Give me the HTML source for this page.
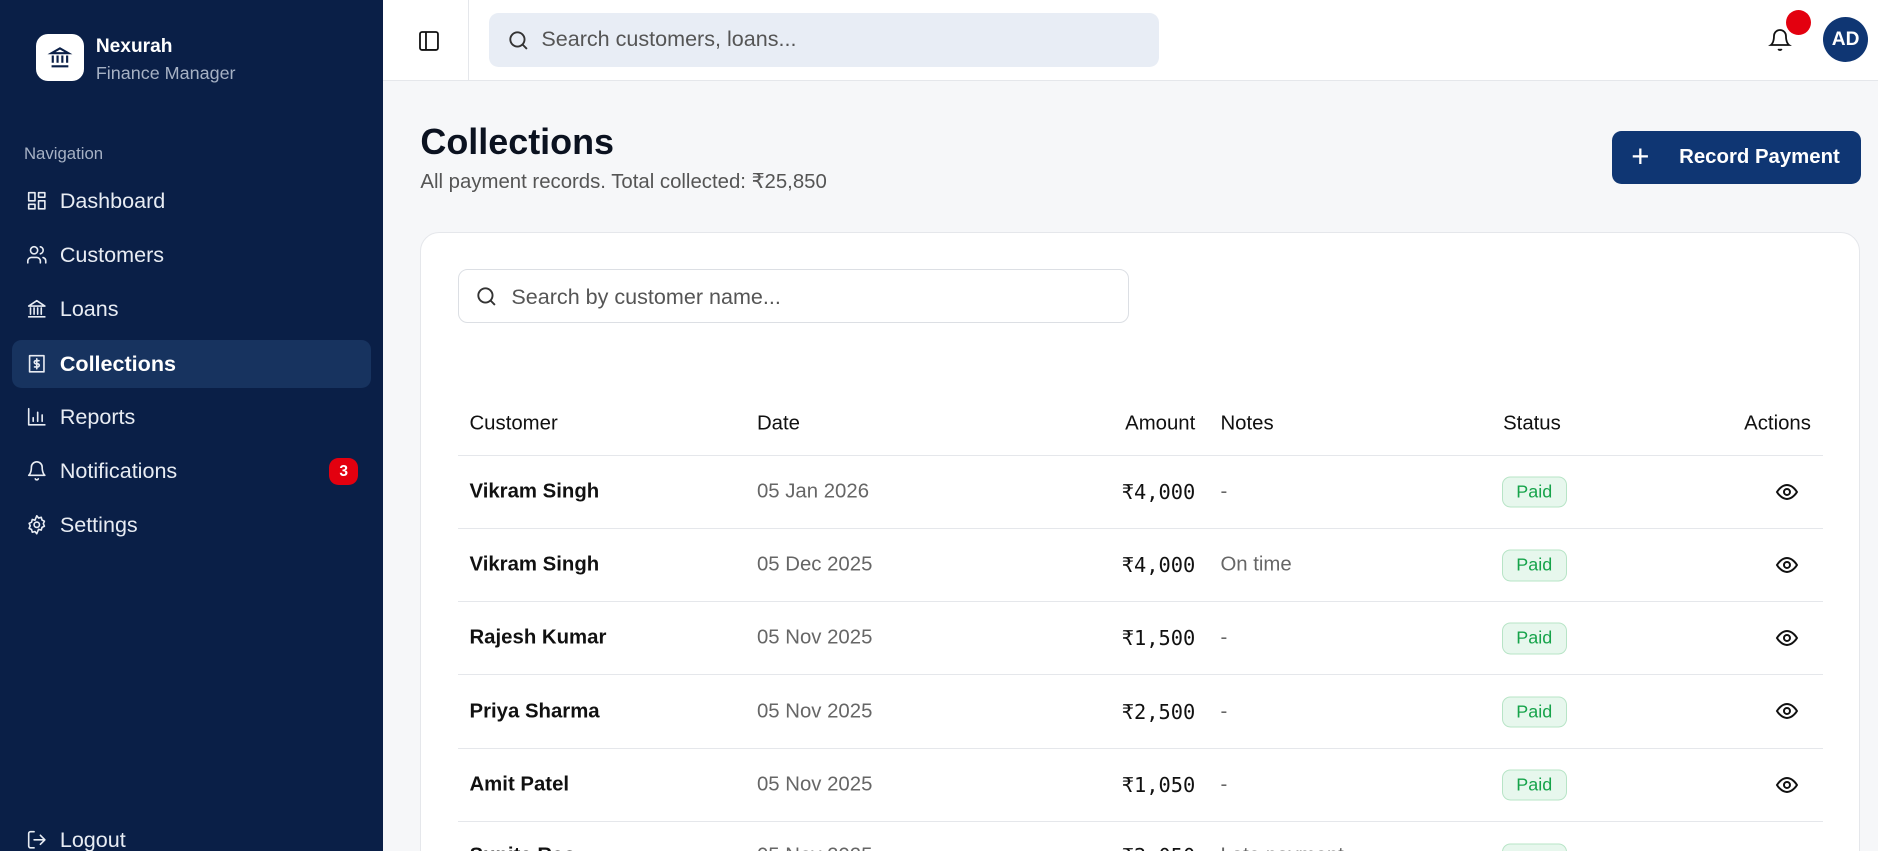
<!DOCTYPE html>
<html><head><meta charset="utf-8"><style>
*{box-sizing:border-box;margin:0;padding:0}
html,body{width:1878px;height:851px;overflow:hidden;background:#f6f7f9}
#w{width:1568px;height:711px;zoom:1.19770;position:relative;font-family:"Liberation Sans",sans-serif;background:#f6f7f9;overflow:hidden}
.a{position:absolute}
.sb{left:0;top:0;width:320px;height:711px;background:#0a1f47;color:#e8ecf3}
.nav{position:absolute;left:10px;width:300px;height:40px;border-radius:8px;display:flex;align-items:center;padding-left:12px;font-size:18px}
.nav svg{width:18px;height:18px;margin-right:10px;stroke:#e8ecf3;fill:none;stroke-width:1.8;stroke-linecap:round;stroke-linejoin:round}
.row{position:absolute;left:382px;width:1140px;height:61px;border-bottom:1px solid #e5e7eb;font-size:17px}
.row span{position:absolute;top:50%;transform:translateY(-50%)}
.c1{left:10px;color:#111;font-weight:bold}
.c2{left:250px;color:#666}
.c3{right:524px;font-family:"DejaVu Sans Mono","Liberation Mono",monospace;font-size:17px;color:#111}
.c4{left:637px;color:#666}
.pd{left:872px;width:54px;height:26px;border:1px solid #b7e4c6;background:#e7f7ed;color:#16a34a;border-radius:7px;font-size:15px;text-align:center;line-height:24px}
.ey{left:1100px;width:20px;height:20px}
</style></head><body><div id="w">
<div class="a sb">
 <div class="a" style="left:30px;top:28px;width:40px;height:40px;background:#fff;border-radius:10px">
  <svg width="40" height="40" viewBox="0 0 40 40" fill="none" stroke="#0a1f47" stroke-width="1.8"><path d="M13 16h14l-7-4z M14 18v6M18 18v6M22 18v6M26 18v6M13 27h14"/></svg></div>
 <div class="a" style="left:80px;top:30px;font-size:16px;font-weight:bold;color:#fff">Nexurah</div>
 <div class="a" style="left:80px;top:53px;font-size:15px;color:#a6b1c4">Finance Manager</div>
 <div class="a" style="left:20px;top:120px;font-size:14px;color:#a6b1c4">Navigation</div>
 <div class="nav" style="top:148px"><svg viewBox="0 0 24 24"><rect x="3" y="3" width="7" height="9"/><rect x="14" y="3" width="7" height="5"/><rect x="14" y="12" width="7" height="9"/><rect x="3" y="16" width="7" height="5"/></svg>Dashboard</div>
 <div class="nav" style="top:193px"><svg viewBox="0 0 24 24"><circle cx="9" cy="7" r="4"/><path d="M2 21v-2a4 4 0 0 1 4-4h6a4 4 0 0 1 4 4v2M16 3.1a4 4 0 0 1 0 7.8M22 21v-2a4 4 0 0 0-3-3.9"/></svg>Customers</div>
 <div class="nav" style="top:238px"><svg viewBox="0 0 24 24"><path d="M3 9h18L12 3z M5 11v7M9 11v7M13 11v7M17 11v7M3 21h18"/></svg>Loans</div>
 <div class="nav" style="top:284px;background:#17335f;font-weight:bold;color:#fff"><svg viewBox="0 0 24 24"><rect x="4" y="3" width="16" height="18"/><path d="M14.5 8.5h-3.5a1.7 1.7 0 0 0 0 3.5h2a1.7 1.7 0 0 1 0 3.5h-3.5M12 6.5v11"/></svg>Collections</div>
 <div class="nav" style="top:328px"><svg viewBox="0 0 24 24"><path d="M3 3v18h18M8 17v-4M13 17V7M18 17v-7"/></svg>Reports</div>
 <div class="nav" style="top:373px"><svg viewBox="0 0 24 24"><path d="M6 8a6 6 0 0 1 12 0c0 7 3 9 3 9H3s3-2 3-9M10.3 21a1.9 1.9 0 0 0 3.4 0"/></svg>Notifications</div>
 <div class="a" style="left:275px;top:382px;width:24px;height:23px;background:#e3000f;border-radius:8px;color:#fff;font-size:13px;font-weight:bold;text-align:center;line-height:23px">3</div>
 <div class="nav" style="top:418px"><svg viewBox="0 0 24 24"><circle cx="12" cy="12" r="3"/><path d="M12 2l2 2.5 3-.8.8 3 2.7 1.3-1.2 2.8 1.2 2.8-2.7 1.3-.8 3-3-.8L12 22l-2-2.5-3 .8-.8-3-2.7-1.3 1.2-2.8-1.2-2.8 2.7-1.3.8-3 3 .8z"/></svg>Settings</div>
 <div class="nav" style="top:681px"><svg viewBox="0 0 24 24"><path d="M9 21H5a2 2 0 0 1-2-2V5a2 2 0 0 1 2-2h4M16 17l5-5-5-5M21 12H9"/></svg>Logout</div>
</div>
<div class="a" style="left:320px;top:0;width:1248px;height:68px;background:#fff;border-bottom:1px solid #e5e7eb"></div>
<div class="a" style="left:391px;top:0;width:1px;height:68px;background:#e5e7eb"></div>
<svg class="a" style="left:348px;top:24px" width="20" height="20" viewBox="0 0 24 24" fill="none" stroke="#111" stroke-width="1.8"><rect x="3" y="3" width="18" height="18" rx="2"/><path d="M9 3v18"/></svg>
<div class="a" style="left:408px;top:11px;width:560px;height:45px;background:#e8edf5;border-radius:8px"></div>
<svg class="a" style="left:423px;top:24px" width="19" height="19" viewBox="0 0 24 24" fill="none" stroke="#333" stroke-width="2"><circle cx="11" cy="11" r="7.5"/><path d="M21 21l-4.5-4.5"/></svg>
<div class="a" style="left:452px;top:22px;font-size:18px;color:#555">Search customers, loans...</div>
<svg class="a" style="left:1476px;top:23px" width="20" height="20" viewBox="0 0 24 24" fill="none" stroke="#111" stroke-width="1.8"><path d="M6 8a6 6 0 0 1 12 0c0 7 3 9 3 9H3s3-2 3-9M10.3 21a1.9 1.9 0 0 0 3.4 0"/></svg>
<div class="a" style="left:1491px;top:8px;width:21px;height:21px;border-radius:50%;background:#e3000f"></div>
<div class="a" style="left:1522px;top:14px;width:38px;height:38px;border-radius:50%;background:#0f3673;color:#fff;font-weight:bold;font-size:16px;text-align:center;line-height:38px">AD</div>
<div class="a" style="left:351px;top:101px;font-size:30px;font-weight:bold;color:#0b1220">Collections</div>
<div class="a" style="left:351px;top:141px;font-size:17px;color:#555">All payment records. Total collected: ₹25,850</div>
<div class="a" style="left:1346px;top:109px;width:208px;height:45px;background:#0f3673;border-radius:8px;color:#fff;font-size:17px;font-weight:bold">
 <span class="a" style="left:16px;top:7px;font-size:26px;font-weight:normal">+</span><span class="a" style="left:56px;top:13px">Record Payment</span></div>
<div class="a" style="left:351px;top:194px;width:1202px;height:540px;background:#fff;border:1px solid #e5e7eb;border-radius:16px"></div>
<div class="a" style="left:382px;top:225px;width:561px;height:45px;border:1px solid #dcdfe4;border-radius:8px"></div>
<svg class="a" style="left:397px;top:238px" width="19" height="19" viewBox="0 0 24 24" fill="none" stroke="#333" stroke-width="2"><circle cx="11" cy="11" r="7.5"/><path d="M21 21l-4.5-4.5"/></svg>
<div class="a" style="left:427px;top:237px;font-size:18px;color:#555">Search by customer name...</div>
<div class="row" style="top:328px;height:53px">
 <span style="left:10px;color:#111">Customer</span><span style="left:250px;color:#111">Date</span><span style="right:524px;color:#111">Amount</span><span style="left:637px;color:#111">Notes</span><span style="left:873px;color:#111">Status</span><span style="right:10px;color:#111">Actions</span></div>
<div class="row" style="top:381px"><span class="c1">Vikram Singh</span><span class="c2">05 Jan 2026</span><span class="c3">₹4,000</span><span class="c4">-</span><span class="pd">Paid</span><svg class="a ey" style="top:20px" viewBox="0 0 24 24" fill="none" stroke="#111" stroke-width="2"><path d="M2 12s4-7 10-7 10 7 10 7-4 7-10 7S2 12 2 12z"/><circle cx="12" cy="12" r="3"/></svg></div>
<div class="row" style="top:442px"><span class="c1">Vikram Singh</span><span class="c2">05 Dec 2025</span><span class="c3">₹4,000</span><span class="c4">On time</span><span class="pd">Paid</span><svg class="a ey" style="top:20px" viewBox="0 0 24 24" fill="none" stroke="#111" stroke-width="2"><path d="M2 12s4-7 10-7 10 7 10 7-4 7-10 7S2 12 2 12z"/><circle cx="12" cy="12" r="3"/></svg></div>
<div class="row" style="top:503px"><span class="c1">Rajesh Kumar</span><span class="c2">05 Nov 2025</span><span class="c3">₹1,500</span><span class="c4">-</span><span class="pd">Paid</span><svg class="a ey" style="top:20px" viewBox="0 0 24 24" fill="none" stroke="#111" stroke-width="2"><path d="M2 12s4-7 10-7 10 7 10 7-4 7-10 7S2 12 2 12z"/><circle cx="12" cy="12" r="3"/></svg></div>
<div class="row" style="top:564px"><span class="c1">Priya Sharma</span><span class="c2">05 Nov 2025</span><span class="c3">₹2,500</span><span class="c4">-</span><span class="pd">Paid</span><svg class="a ey" style="top:20px" viewBox="0 0 24 24" fill="none" stroke="#111" stroke-width="2"><path d="M2 12s4-7 10-7 10 7 10 7-4 7-10 7S2 12 2 12z"/><circle cx="12" cy="12" r="3"/></svg></div>
<div class="row" style="top:625px"><span class="c1">Amit Patel</span><span class="c2">05 Nov 2025</span><span class="c3">₹1,050</span><span class="c4">-</span><span class="pd">Paid</span><svg class="a ey" style="top:20px" viewBox="0 0 24 24" fill="none" stroke="#111" stroke-width="2"><path d="M2 12s4-7 10-7 10 7 10 7-4 7-10 7S2 12 2 12z"/><circle cx="12" cy="12" r="3"/></svg></div>
<div class="row" style="top:686px;height:25px;border-bottom:none;overflow:hidden"><span class="c1" style="top:29px">Sunita Rao</span><span class="c2" style="top:29px">05 Nov 2025</span><span class="c3" style="top:29px">₹2,050</span><span class="c4" style="top:29px">Late payment</span><span class="pd" style="top:31px">Paid</span></div>
</div></body></html>
